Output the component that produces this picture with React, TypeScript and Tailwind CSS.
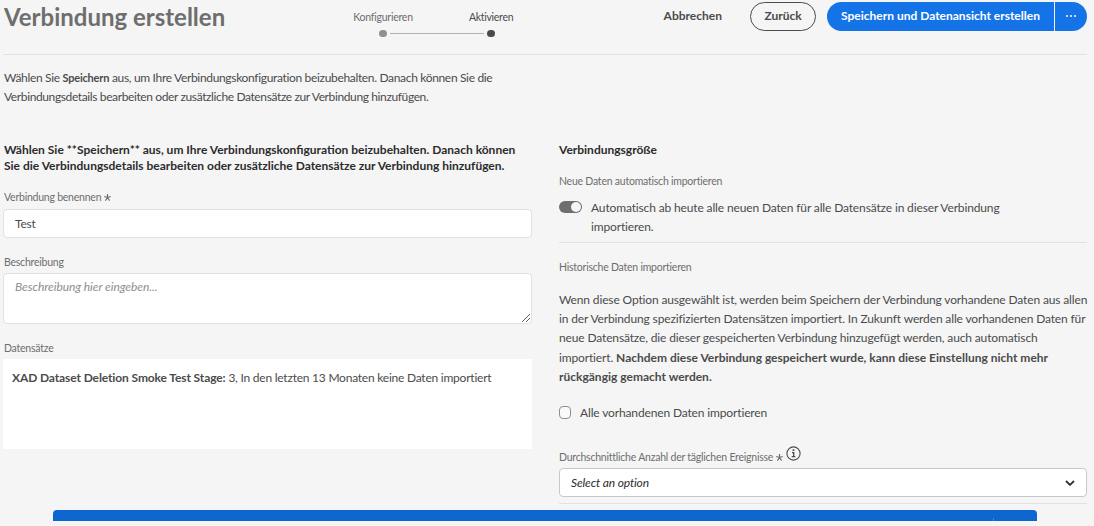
import React from "react";

function FieldLabel({ children, required = false }: { children: React.ReactNode; required?: boolean }) {
  return (
    <div className="flex h-4 items-center whitespace-nowrap text-[10.5px] leading-4 tracking-[-0.23px] text-[#6e6e6e]">
      {children}
      {required && <Asterisk />}
    </div>
  );
}

function Asterisk() {
  return (
    <svg className="ml-[3px] mt-px size-[7px]" viewBox="0 0 6 6" fill="none" stroke="#6e6e6e" strokeWidth="1">
      <path d="M3 3V0M3 3L.2 2.1M3 3l2.8-.9M3 3L1.2 5.7M3 3l1.8 2.7" />
    </svg>
  );
}

function Header() {
  return (
    <header className="flex h-[55px] items-start border-b border-[#e1e1e1]">
      <h1 className="w-[340px] whitespace-nowrap pl-px pt-px text-2xl font-bold leading-8 text-[#6e6e6e]">
        Verbindung erstellen
      </h1>
      <div className="mt-[9px] grid w-[188px] grid-cols-[80px_108px] text-[10.5px] leading-4">
        <span className="text-center tracking-[-0.24px] text-[#6e6e6e]">Konfigurieren</span>
        <span className="pl-[46px] tracking-[-0.3px] text-[#4b4b4b]">Aktivieren</span>
        <div className="col-span-2 flex h-[17px] items-center pl-9">
          <span className="h-[7px] w-2 rounded-full bg-[#909090]" />
          <span className="ml-[3px] h-px w-[94px] bg-[#b1b1b1]" />
          <span className="ml-[3px] h-[7px] w-2 rounded-full bg-[#4b4b4b]" />
        </div>
      </div>
      <div className="ml-auto flex pt-0.5 text-xs font-bold leading-none">
        <button className="mr-7 h-7 whitespace-nowrap text-[#4b4b4b]">Abbrechen</button>
        <button className="mr-[11px] h-[29px] w-[66px] rounded-full border border-[#4b4b4b] pb-0.5 text-[#4b4b4b]">
          Zurück
        </button>
        <button className="h-[29px] w-[227px] whitespace-nowrap rounded-l-full bg-[#1473e6] pb-0.5 text-white">
          Speichern und Datenansicht erstellen
        </button>
        <button className="ml-px flex h-[29px] w-8 items-center justify-center gap-[1.5px] rounded-r-full bg-[#1473e6] pb-px">
          <span className="size-[2.5px] rounded-full bg-white" />
          <span className="size-[2.5px] rounded-full bg-white" />
          <span className="size-[2.5px] rounded-full bg-white" />
        </button>
      </div>
    </header>
  );
}

function ConnectionForm() {
  return (
    <section className="w-[529px]">
      <h2 className="whitespace-nowrap pl-px text-xs font-bold leading-4 text-[#2c2c2c]">
        Wählen Sie **Speichern** aus, um Ihre Verbindungskonfiguration beizubehalten. Danach können
        <br />
        Sie die Verbindungsdetails bearbeiten oder zusätzliche Datensätze zur Verbindung hinzufügen.
      </h2>
      <div className="mt-[15px] pl-px">
        <FieldLabel required>Verbindung benennen</FieldLabel>
      </div>
      <div className="mt-1 flex h-[29px] items-center rounded border border-[#e1e1e1] bg-white px-[11px] text-xs tracking-[-0.2px] text-[#4b4b4b]">
        Test
      </div>
      <div className="mt-4 pl-px">
        <FieldLabel>Beschreibung</FieldLabel>
      </div>
      <div className="mt-[3px] flex h-[51px] rounded border border-[#e1e1e1] bg-white pl-[11px] text-xs italic leading-4 tracking-[-0.06px] text-[#8e8e8e]">
        <span className="mt-[5px]">Beschreibung hier eingeben...</span>
        <svg className="mb-px ml-auto mr-px size-2 self-end" viewBox="0 0 8 8" stroke="#4b4b4b" strokeWidth=".9">
          <path d="M0 8L8 0M4 8l4-4" />
        </svg>
      </div>
      <div className="mt-4 pl-px">
        <FieldLabel>Datensätze</FieldLabel>
      </div>
      <div className="mt-[3px] h-[90px] whitespace-nowrap bg-white pl-[9px] pt-[11px] text-xs leading-4 tracking-[-0.23px] text-[#4b4b4b]">
        <b className="tracking-[-0.11px]">XAD Dataset Deletion Smoke Test Stage:</b> 3, In den letzten 13 Monaten keine Daten importiert
      </div>
    </section>
  );
}

function ConnectionSize() {
  return (
    <section className="w-[528px] text-xs tracking-[-0.14px] text-[#4b4b4b]">
      <h2 className="font-bold leading-4 tracking-normal text-[#2c2c2c]">Verbindungsgröße</h2>
      <div className="mt-[15px]">
        <FieldLabel>Neue Daten automatisch importieren</FieldLabel>
      </div>
      <div className="mt-[9px] flex h-[45px] border-b border-[#e1e1e1]">
        <span className="mt-[3px] flex h-3 w-[23px] items-center justify-end rounded-full bg-[#6e6e6e] px-px">
          <span className="size-[10px] rounded-full bg-[#f5f5f5]" />
        </span>
        <p className="ml-[9px] whitespace-nowrap leading-[19px]">
          Automatisch ab heute alle neuen Daten für alle Datensätze in dieser Verbindung
          <br />
          importieren.
        </p>
      </div>
      <div className="mt-4">
        <FieldLabel>Historische Daten importieren</FieldLabel>
      </div>
      <p className="mt-[15px] whitespace-nowrap leading-[19.2px]">
        Wenn diese Option ausgewählt ist, werden beim Speichern der Verbindung vorhandene Daten aus allen
        <br />
        in der Verbindung spezifizierten Datensätzen importiert. In Zukunft werden alle vorhandenen Daten für
        <br />
        neue Datensätze, die dieser gespeicherten Verbindung hinzugefügt werden, auch automatisch
        <br />
        importiert. <b className="tracking-normal">Nachdem diese Verbindung gespeichert wurde, kann diese Einstellung nicht mehr</b>
        <br />
        <b className="tracking-normal">rückgängig gemacht werden.</b>
      </p>
      <label className="mt-[19px] flex h-4 items-center leading-4">
        <span className="-mt-0.5 mr-[9px] h-[13px] w-3 rounded-sm border border-[#8e8e8e] bg-[#fafafa]" />
        Alle vorhandenen Daten importieren
      </label>
      <div className="mt-7 flex h-4">
        <FieldLabel required>Durchschnittliche Anzahl der täglichen Ereignisse</FieldLabel>
        <svg className="-mt-[3px] ml-[3px] size-[15px]" viewBox="0 0 15 15" fill="none" stroke="#4b4b4b">
          <circle cx="7.5" cy="7.5" r="6.6" strokeWidth="1.1" />
          <path d="M7.5 3.3v1.8" strokeWidth="1.8" />
          <path d="M6 6.7h1.7v3.8M5.7 10.7h3.6" strokeWidth="1.3" />
        </svg>
      </div>
      <div className="mt-[3px] flex h-[29px] items-center justify-between rounded border border-[#c8c8c8] bg-white pl-[11px] pr-[11px] italic text-[#2c2c2c]">
        Select an option
        <svg className="h-[6px] w-[10px]" viewBox="0 0 10 6" fill="none" stroke="#2c2c2c" strokeWidth="1.8">
          <path d="M1 1l4 3.8L9 1" />
        </svg>
      </div>
      <div className="mt-1.5 h-px bg-[#e1e1e1]" />
    </section>
  );
}

export default function App() {
  return (
    <div className="relative h-[526px] w-[1094px] overflow-hidden bg-[#f5f5f5] pl-[3px] pr-[7px] font-[Lato,'Open_Sans',sans-serif]">
      <Header />
      <p className="mt-[13px] h-[74px] whitespace-nowrap pl-px text-xs leading-[19px] tracking-[-0.33px] text-[#4b4b4b]">
        Wählen Sie <b className="text-[11px] tracking-[-0.2px]">Speichern</b> aus, um Ihre Verbindungskonfiguration beizubehalten. Danach
        können Sie die
        <br />
        <span className="tracking-[-0.38px]">
          Verbindungsdetails bearbeiten oder zusätzliche Datensätze zur Verbindung hinzufügen.
        </span>
      </p>
      <main className="flex justify-between">
        <ConnectionForm />
        <ConnectionSize />
      </main>
      <div className="absolute left-[53px] top-[510px] flex h-[11px] w-[984px] justify-end rounded-t bg-[#0d66d0]">
        <span className="mr-[43px] mt-2 h-[3px] w-px bg-[#3f86dc]" />
      </div>
    </div>
  );
}
